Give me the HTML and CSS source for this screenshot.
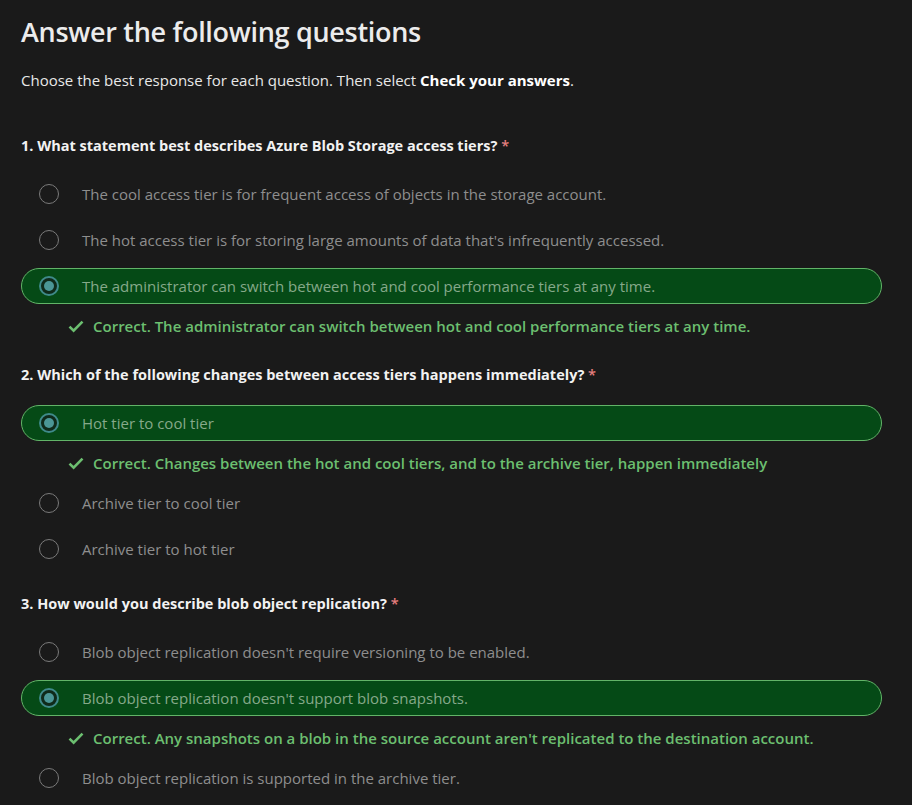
FILE: index.html
```html
<!DOCTYPE html>
<html lang="en">
<head>
<meta charset="utf-8">
<title>Answer the following questions</title>
<link rel="stylesheet" href="styles.css">
</head>
<body>
<main class="quiz">
  <h1 class="title">Answer the following questions</h1>
  <p class="intro">Choose the best response for each question. Then select <strong>Check your answers</strong>.</p>

  <section class="question">
    <h2 class="q-head">1. What statement best describes Azure Blob Storage access tiers? <span class="req">*</span></h2>
    <div class="options">
      <div class="option"><span class="radio"></span><span class="label">The cool access tier is for frequent access of objects in the storage account.</span></div>
      <div class="option"><span class="radio"></span><span class="label">The hot access tier is for storing large amounts of data that's infrequently accessed.</span></div>
      <div class="option selected"><span class="radio"></span><span class="label">The administrator can switch between hot and cool performance tiers at any time.</span></div>
      <div class="feedback"><svg class="check" viewBox="0 0 16 16" width="16" height="16"><path d="M1.5 8.6 L5.6 12.6 L14.5 3.6" fill="none" stroke="currentColor" stroke-width="2.6"/></svg><span>Correct. The administrator can switch between hot and cool performance tiers at any time.</span></div>
    </div>
  </section>

  <section class="question">
    <h2 class="q-head">2. Which of the following changes between access tiers happens immediately? <span class="req">*</span></h2>
    <div class="options">
      <div class="option selected"><span class="radio"></span><span class="label">Hot tier to cool tier</span></div>
      <div class="feedback"><svg class="check" viewBox="0 0 16 16" width="16" height="16"><path d="M1.5 8.6 L5.6 12.6 L14.5 3.6" fill="none" stroke="currentColor" stroke-width="2.6"/></svg><span>Correct. Changes between the hot and cool tiers, and to the archive tier, happen immediately</span></div>
      <div class="option"><span class="radio"></span><span class="label">Archive tier to cool tier</span></div>
      <div class="option"><span class="radio"></span><span class="label">Archive tier to hot tier</span></div>
    </div>
  </section>

  <section class="question">
    <h2 class="q-head">3. How would you describe blob object replication? <span class="req">*</span></h2>
    <div class="options">
      <div class="option"><span class="radio"></span><span class="label">Blob object replication doesn't require versioning to be enabled.</span></div>
      <div class="option selected"><span class="radio"></span><span class="label">Blob object replication doesn't support blob snapshots.</span></div>
      <div class="feedback"><svg class="check" viewBox="0 0 16 16" width="16" height="16"><path d="M1.5 8.6 L5.6 12.6 L14.5 3.6" fill="none" stroke="currentColor" stroke-width="2.6"/></svg><span>Correct. Any snapshots on a blob in the source account aren't replicated to the destination account.</span></div>
      <div class="option"><span class="radio"></span><span class="label">Blob object replication is supported in the archive tier.</span></div>
    </div>
  </section>
</main>
</body>
</html>
```

FILE: styles.css
```css
html, body {
  margin: 0;
  padding: 0;
  background: #1a1a1a;
}

body {
  font-family: "Open Sans", "Noto Sans", sans-serif;
  color: #e6e6e6;
}

.quiz {
  padding: 14px 30px 0 21px;
}

.title {
  margin: 0;
  font-size: 27px;
  line-height: 36px;
  font-weight: 600;
  color: #ececec;
  letter-spacing: -0.3px;
}

.intro {
  margin: 19px 0 0;
  font-size: 15px;
  line-height: 22px;
  color: #e8e8e8;
}

.intro strong {
  font-weight: 700;
  color: #ffffff;
}

.question {
  margin-top: 45px;
}

.question + .question {
  margin-top: 27px;
}

.q-head {
  margin: 0;
  font-size: 14.5px;
  line-height: 20px;
  font-weight: 700;
  color: #f2f2f2;
}

.req {
  color: #e67f7f;
  font-weight: 600;
}

.options {
  margin-top: 20px;
  display: flex;
  flex-direction: column;
  gap: 10px;
}

.option {
  display: flex;
  align-items: center;
  height: 36px;
  box-sizing: border-box;
  padding-left: 17px;
  border: 1px solid transparent;
  border-radius: 18px;
}

.option .label {
  margin-left: 23px;
  font-size: 15px;
  color: #8e8e8e;
}

.radio {
  width: 20px;
  height: 20px;
  box-sizing: border-box;
  border: 1.5px solid #7a7a7a;
  border-radius: 50%;
  flex: none;
  display: flex;
  align-items: center;
  justify-content: center;
}

.option.selected {
  background: #054a16;
  border-color: #62b468;
}

.option.selected .label {
  color: #86a98a;
}

.option.selected .radio {
  border: 2px solid #3f8a8a;
  background: #0f2a1a;
}

.option.selected .radio::after {
  content: "";
  width: 10px;
  height: 10px;
  border-radius: 50%;
  background: #4b9696;
}

.feedback {
  display: flex;
  align-items: center;
  height: 24px;
  padding-left: 47px;
  color: #6cbf70;
  font-size: 15px;
  font-weight: 600;
}

.feedback .check {
  flex: none;
  margin-right: 9px;
}
```
